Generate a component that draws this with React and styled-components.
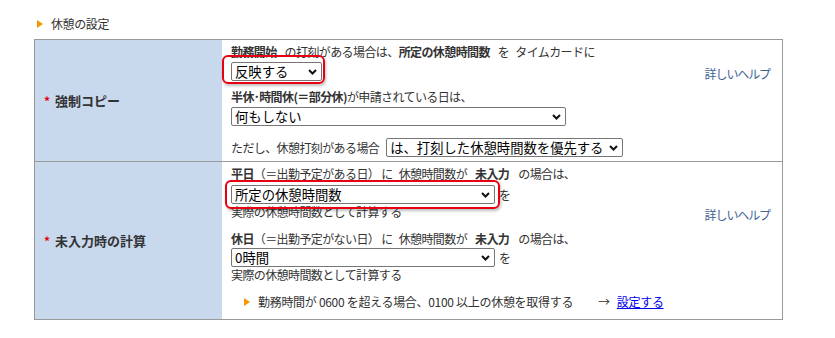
import styled, { createGlobalStyle } from "styled-components";

const Global = createGlobalStyle`
body{
  margin: 0;
  background: #fff;
  font-family: "Noto Sans CJK JP", "Noto Sans", sans-serif;
  font-size: 12px;
  color: #333;
}
`

const Page = styled.div`
padding: 16px 0 0 34px;
`

const Heading = styled.div`
display: flex;
align-items: center;
height: 16px;
line-height: 16px;
margin-bottom: 7px;
padding-left: 3px;
letter-spacing: -0.4px;
`

const Tri = styled.span`
display: inline-block;
width: 0;
height: 0;
border-top: 4px solid transparent;
border-bottom: 4px solid transparent;
border-left: 6px solid #f39800;
margin-right: ${({ gap }) => gap || 8}px;
`

const Table = styled.div`
box-sizing: border-box;
width: 749px;
border: 1px solid #999;
display: grid;
grid-template-columns: 187px 1fr;
`

const Label = styled.div`
background: #c8d9ee;
display: flex;
align-items: center;
padding-left: 9px;
font-size: 13px;
font-weight: 700;
border-top: ${({ first }) => first ? 'none' : '1px solid #999'};
`

const Star = styled.span`
color: #e60012;
margin-right: 5px;
font-size: 12px;
`

const Cell = styled.div`
display: flex;
justify-content: space-between;
padding: 4px 12px ${({ bottom }) => bottom || 4}px 9px;
border-top: ${({ first }) => first ? 'none' : '1px solid #999'};
`

const Body = styled.div`
display: flex;
flex-direction: column;
align-items: flex-start;
`

const Line = styled.div`
line-height: 16px;
margin-top: ${({ mt }) => mt || 0}px;
display: flex;
align-items: center;
white-space: nowrap;
letter-spacing: -0.6px;
`

const B = styled.b`
font-weight: 700;
`

const Sp = styled.span`
display: inline-block;
width: ${({ w }) => w || 6}px;
`

const SelectBox = styled.span`
position: relative;
display: inline-flex;
width: ${({ w }) => w}px;
letter-spacing: 0;

svg{
  position: absolute;
  right: 5px;
  top: 7px;
  pointer-events: none;
}
`

const Pick = styled.select`
appearance: none;
box-sizing: border-box;
width: 100%;
height: 19px;
font-family: "Noto Sans CJK JP", "Noto Sans", sans-serif;
font-size: 13.33px;
line-height: 17px;
color: #000;
background: #fff;
border: 1px solid #767676;
border-radius: 2px;
padding: 0 16px 0 3px;
margin: 0;
`

const Chevron = () => (
  <svg width="9" height="6" viewBox="0 0 9 6">
    <path d="M1 1 L4.5 4.5 L8 1" fill="none" stroke="#111" strokeWidth="2" />
  </svg>
)

const Select = ({ w, children }) => (
  <SelectBox w={w}>
    <Pick>{children}</Pick>
    <Chevron />
  </SelectBox>
)

const Mark = styled.span`
position: relative;
display: inline-flex;

&::after{
  content: "";
  position: absolute;
  top: ${({ t }) => t}px;
  left: ${({ l }) => l}px;
  right: ${({ r }) => r}px;
  bottom: ${({ b }) => b}px;
  border: 2px solid #e60012;
  border-radius: 6px;
  box-shadow: 1px 2px 3px rgba(0,0,0,0.25);
  pointer-events: none;
}
`

const Help = styled.a`
color: #3f6294;
text-decoration: none;
line-height: 16px;
letter-spacing: -1.1px;
margin-top: ${({ mt }) => mt}px;
white-space: nowrap;
`

const Setting = styled.a`
color: #0000ee;
text-decoration: underline;
`

const Note = styled.div`
display: flex;
align-items: center;
line-height: 16px;
margin: 11px 0 0 13px;
white-space: nowrap;
letter-spacing: -0.3px;
`

export default function App() {
  return (
    <Page>
      <Global />
      <Heading><Tri gap={8} />休憩の設定</Heading>
      <Table>
        <Label first><Star>*</Star>強制コピー</Label>
        <Cell first>
          <Body>
            <Line><B>勤務開始</B><Sp w={8} />の打刻がある場合は、<B>所定の休憩時間数</B><Sp w={8} />を<Sp w={6} />タイムカードに</Line>
            <Line mt={2}>
              <Mark t={-7} l={-9} r={-3} b={-3}>
                <Select w={91}><option>反映する</option></Select>
              </Mark>
            </Line>
            <Line mt={8}><B>半休･時間休(＝部分休)</B>が申請されている日は、</Line>
            <Line mt={2}><Select w={335}><option>何もしない</option></Select></Line>
            <Line mt={12}>ただし、休憩打刻がある場合<Sp w={7} /><Select w={237}><option>は、打刻した休憩時間数を優先する</option></Select></Line>
          </Body>
          <Help href="#" mt={22}>詳しいヘルプ</Help>
        </Cell>

        <Label><Star>*</Star>未入力時の計算</Label>
        <Cell bottom={9}>
          <Body>
            <Line><B>平日</B>（＝出勤予定がある日）<Sp w={2} />に<Sp w={6} />休憩時間数が<Sp w={8} /><B>未入力</B><Sp w={9} />の場合は、</Line>
            <Line mt={3}>
              <Mark t={-5} l={-6} r={-5} b={-5}>
                <Select w={264}><option>所定の休憩時間数</option></Select>
              </Mark>
              <Sp w={4} />を
            </Line>
            <Line>実際の休憩時間数として計算する</Line>
            <Line mt={11}><B>休日</B>（＝出勤予定がない日）<Sp w={2} />に<Sp w={6} />休憩時間数が<Sp w={8} /><B>未入力</B><Sp w={9} />の場合は、</Line>
            <Line mt={1}><Select w={264}><option>0時間</option></Select><Sp w={4} />を</Line>
            <Line>実際の休憩時間数として計算する</Line>
            <Note>
              <Tri gap={8} />
              勤務時間が 0600 を超える場合、0100 以上の休憩を取得する
              <Sp w={25} />→<Sp w={7} /><Setting href="#">設定する</Setting>
            </Note>
          </Body>
          <Help href="#" mt={41}>詳しいヘルプ</Help>
        </Cell>
      </Table>
    </Page>
  )
}
